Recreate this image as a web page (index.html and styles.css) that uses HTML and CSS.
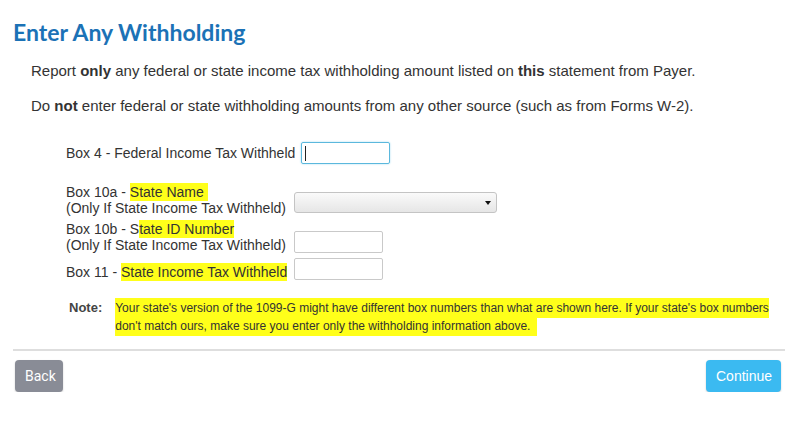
FILE: index.html
```html
<!DOCTYPE html>
<html lang="en">
<head>
    <meta charset="UTF-8">
    <title>Enter Any Withholding</title>
    <link rel="stylesheet" href="styles.css">
</head>
<body>
    <div class="page">
        <h1>Enter Any Withholding</h1>
        <p class="intro">Report <b>only</b> any federal or state income tax withholding amount listed on <b>this</b> statement from Payer.</p>
        <p class="intro">Do <b>not</b> enter federal or state withholding amounts from any other source (such as from Forms W-2).</p>

        <div class="fields">
            <div class="row-first">
                <label>Box 4 - Federal Income Tax Withheld</label>
                <input type="text" class="amount focus">
            </div>

            <div class="grid">
                <label>Box 10a - <span class="mark">State Name&nbsp;</span><br>(Only If State Income Tax Withheld)</label>
                <div class="select"><span class="caret"></span></div>

                <label>Box 10b - S<span class="mark">tate ID Number</span><br>(Only If State Income Tax Withheld)</label>
                <input type="text" class="amount">

                <label>Box 11 - <span class="mark">State Income Tax Withheld</span></label>
                <input type="text" class="amount">
            </div>

            <div class="note">
                <b>Note:</b>
                <p><span class="mark">Your state's version of the 1099-G might have different box numbers than what are shown here. If your state's box numbers don't match ours, make sure you enter only the withholding information above.&nbsp;&nbsp;</span></p>
            </div>
        </div>

        <div class="actions">
            <button class="btn back">Back</button>
            <button class="btn next">Continue</button>
        </div>
    </div>
</body>
</html>
```

FILE: styles.css
```css
* {
    margin: 0;
    padding: 0;
    box-sizing: border-box;
}

body {
    font-family: "Liberation Sans", Arial, sans-serif;
    color: #333;
    background: #fff;
}

.page {
    width: 811px;
    padding: 18px 26px 0 13px;
}

h1 {
    font-family: Lato, sans-serif;
    font-weight: 700;
    font-size: 23px;
    color: #1b72b6;
    line-height: 28px;
}

.intro {
    font-size: 15px;
    line-height: 18px;
    margin: 16px 0 0 18px;
}

.intro + .intro {
    margin-top: 17px;
}

.fields {
    margin: 27px 0 0 53px;
    font-size: 14px;
}

.row-first {
    display: flex;
    align-items: center;
    gap: 6px;
}

.grid {
    display: grid;
    grid-template-columns: 228px auto;
    row-gap: 5px;
    align-items: end;
    justify-items: start;
    margin-top: 20px;
}

.grid label {
    line-height: 16px;
}

.mark {
    background: #ffff1a;
    padding: 1px 0;
}

.amount {
    width: 89px;
    height: 22px;
    border: 1px solid #c9c9c9;
    border-radius: 2px;
    font: inherit;
}

.row-first .focus {
    border: 1px solid #5bb8dd;
    box-shadow: 0 0 2px #9dd7ee;
    outline: none;
    background: linear-gradient(#222, #222) 3px 3px / 1px 15px no-repeat;
}

.select {
    width: 203px;
    height: 21px;
    border: 1px solid #c4c4c4;
    border-radius: 3px;
    background: linear-gradient(#fafafa, #e6e6e6);
    position: relative;
    margin-bottom: 3px;
}

.caret {
    position: absolute;
    right: 5px;
    top: 8px;
    border-left: 3px solid transparent;
    border-right: 3px solid transparent;
    border-top: 4px solid #111;
}

.note {
    display: flex;
    gap: 13px;
    margin: 19px 0 0 3px;
    font-size: 12px;
    line-height: 18px;
}

.note b {
    font-size: 13px;
    color: #444;
}

.note p {
    width: 660px;
}

.note .mark {
    padding: 3px 0;
}

.actions {
    margin-top: 14px;
    border-top: 2px solid #dedede;
    padding: 9px 4px 0 2px;
    display: flex;
    justify-content: space-between;
}

.btn {
    height: 32px;
    border: 0;
    border-radius: 4px;
    color: #fff;
    font-family: Roboto, "Liberation Sans", sans-serif;
    font-size: 14px;
    padding: 0 10px;
    box-shadow: 0 1px 2px rgba(0, 0, 0, 0.2);
}

.back {
    background: #898c96;
    width: 48px;
}

.next {
    background: #3bbaf1;
    width: 75px;
    font-family: "Liberation Sans", Arial, sans-serif;
}
```
